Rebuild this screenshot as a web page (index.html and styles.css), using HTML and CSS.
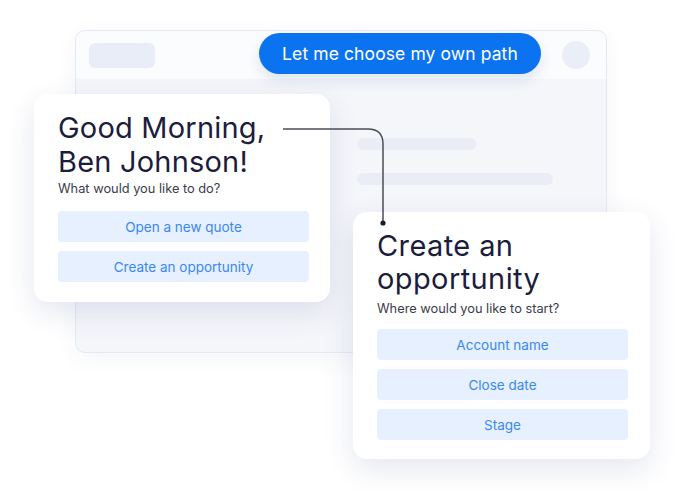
FILE: index.html
```html
<!DOCTYPE html>
<html lang="en">
<head>
<meta charset="utf-8">
<title>Assistant flow</title>
<link rel="stylesheet" href="styles.css">
</head>
<body>
<div class="stage">

  <!-- app window in the back -->
  <div class="window">
    <div class="window-bar">
      <span class="bar-pill"></span>
      <a href="javascript:;" class="path-btn">Let me choose my own path</a>
      <span class="bar-avatar"></span>
    </div>
    <div class="window-body">
      <span class="skel skel-short"></span>
      <span class="skel skel-long"></span>
    </div>
  </div>

  <!-- greeting card -->
  <div class="card card-greet">
    <h1 class="card-title">Good Morning,<br>Ben Johnson!</h1>
    <p class="card-sub">What would you like to do?</p>
    <div class="choices">
      <a href="javascript:;" class="choice">Open a new quote</a>
      <a href="javascript:;" class="choice">Create an opportunity</a>
    </div>
  </div>

  <!-- follow-up card -->
  <div class="card card-opp">
    <h1 class="card-title">Create an<br>opportunity</h1>
    <p class="card-sub">Where would you like to start?</p>
    <div class="choices">
      <a href="javascript:;" class="choice">Account name</a>
      <a href="javascript:;" class="choice">Close date</a>
      <a href="javascript:;" class="choice">Stage</a>
    </div>
  </div>

  <!-- line joining the two cards -->
  <svg class="link" width="700" height="500" viewBox="0 0 700 500">
    <path d="M283 129 H368 Q383 129 383 144 V223" fill="none" stroke="#4b4c57" stroke-width="1.5"/>
    <circle cx="383" cy="223" r="2.6" fill="#1b1c2c"/>
  </svg>

</div>
</body>
</html>
```

FILE: styles.css
```css
*{margin:0;padding:0;box-sizing:border-box;}
body{background:#fff;font-family:"Inter","Open Sans",sans-serif;}
a{text-decoration:none;}

.stage{position:relative;width:700px;height:500px;overflow:hidden;}

/* back window */
.window{position:absolute;left:75px;top:30px;width:532px;height:323px;border:1px solid #e4e8f2;border-radius:10px;background:#f5f6fa;overflow:hidden;box-shadow:0 6px 24px rgba(40,60,120,.05);}
.window-bar{height:48px;display:flex;align-items:center;padding:0 16px 0 13px;background:#fbfcfe;}
.bar-pill{width:66px;height:25px;border-radius:6px;background:#e9edf7;}
.path-btn{margin-left:auto;margin-top:-3px;width:282px;height:41px;border-radius:21px;background:#0b73f0;color:#fff;font-size:17.5px;letter-spacing:.1px;display:flex;align-items:center;justify-content:center;box-shadow:0 6px 14px rgba(20,60,140,.12);}
.bar-avatar{margin-left:21px;width:28px;height:28px;border-radius:50%;background:#eaeef7;}
.window-body{display:flex;flex-direction:column;align-items:flex-start;gap:23px;padding:59px 0 0 281px;}
.skel{display:block;height:12px;border-radius:6px;background:#eaedf6;}
.skel-short{width:119px;}
.skel-long{width:196px;}

/* cards */
.card{position:absolute;background:#fff;border-radius:14px;box-shadow:0 10px 30px rgba(40,60,130,.12);}
.card-greet{left:34px;top:94px;width:296px;height:208px;padding:17px 21px 0 24px;}
.card-opp{left:353px;top:212px;width:297px;height:247px;padding:17px 22px 0 24px;}
.card-title{font-size:29px;line-height:34px;font-weight:400;color:#1c1d3d;letter-spacing:.2px;}
.card-opp .card-title{line-height:33px;letter-spacing:.4px;}
.card-sub{font-size:12.8px;line-height:18px;color:#3b3c4b;margin-top:1px;}
.card-opp .card-sub{margin-top:5px;}

.choices{display:flex;flex-direction:column;gap:9px;margin-top:13px;}
.card-opp .choices{margin-top:11px;}
.choice{height:31px;border-radius:4px;background:#e6f0fe;color:#3a88f4;font-size:13.5px;display:flex;align-items:center;justify-content:center;}

.link{position:absolute;left:0;top:0;}
```
